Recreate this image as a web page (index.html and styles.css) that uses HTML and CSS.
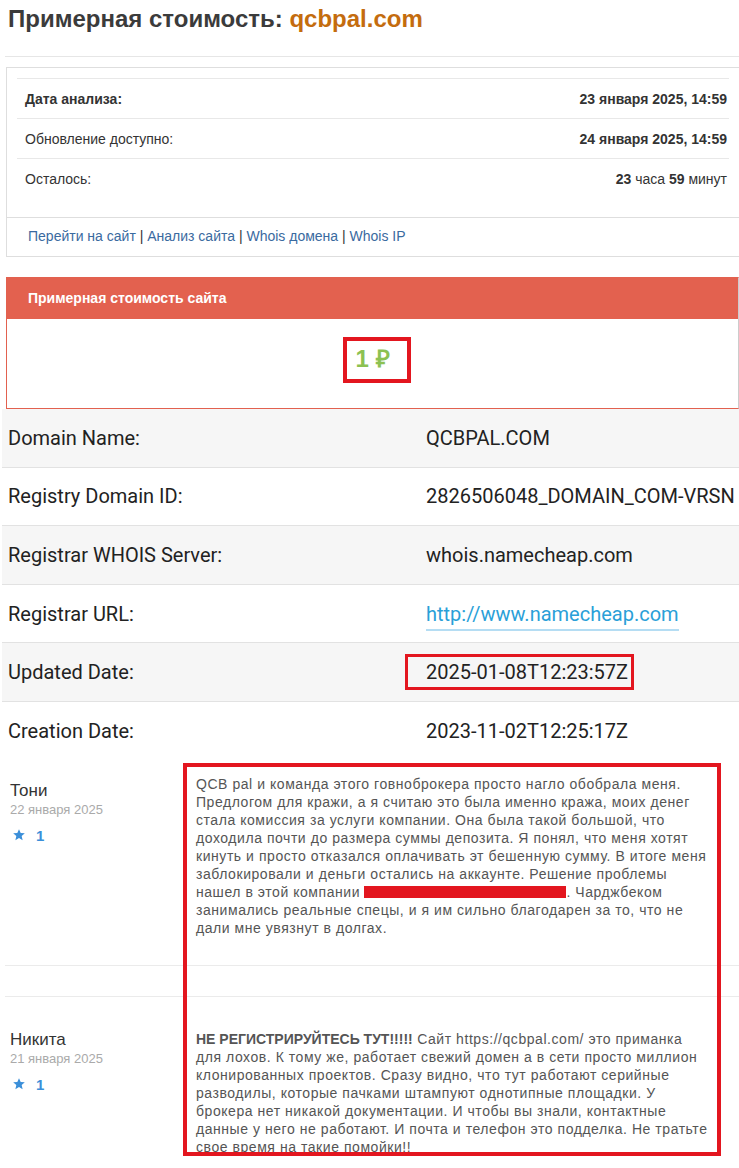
FILE: index.html
```html
<!DOCTYPE html>
<html>
	<head>
		<meta charset="utf-8" />
		<title>Примерная стоимость: qcbpal.com</title>
		<link rel="stylesheet" href="styles.css">
	</head>
	<body>
		<div id="page">
			<h1 class="title">Примерная стоимость: <span class="domain">qcbpal.com</span></h1>
			<hr class="divider" />

			<div class="panel">
				<div class="panel-body">
					<table class="info">
						<tr>
							<td><b>Дата анализа:</b></td>
							<td class="right"><b>23 января 2025, 14:59</b></td>
						</tr>
						<tr>
							<td>Обновление доступно:</td>
							<td class="right"><b>24 января 2025, 14:59</b></td>
						</tr>
						<tr>
							<td>Осталось:</td>
							<td class="right"><b>23</b> часа <b>59</b> минут</td>
						</tr>
					</table>
				</div>
				<div class="panel-footer">
					<a href="#">Перейти на сайт</a> | <a href="#">Анализ сайта</a> | <a href="#">Whois домена</a> | <a href="#">Whois IP</a>
				</div>
			</div>

			<div class="price-card">
				<div class="price-head">Примерная стоимость сайта</div>
				<div class="price-body">
					<span class="price mark">1 ₽</span>
				</div>
			</div>

			<table class="whois">
				<tr>
					<td class="key">Domain Name:</td>
					<td>QCBPAL.COM</td>
				</tr>
				<tr>
					<td class="key">Registry Domain ID:</td>
					<td>2826506048_DOMAIN_COM-VRSN</td>
				</tr>
				<tr>
					<td class="key">Registrar WHOIS Server:</td>
					<td>whois.namecheap.com</td>
				</tr>
				<tr>
					<td class="key">Registrar URL:</td>
					<td><a class="ext" href="#">http://www.namecheap.com</a></td>
				</tr>
				<tr>
					<td class="key">Updated Date:</td>
					<td><span class="mark mark-thin">2025-01-08T12:23:57Z</span></td>
				</tr>
				<tr>
					<td class="key">Creation Date:</td>
					<td>2023-11-02T12:25:17Z</td>
				</tr>
			</table>

			<div class="comments">
				<div class="comment first">
					<div class="author">
						<div class="name">Тони</div>
						<div class="date">22 января 2025</div>
						<div class="rating"><svg viewBox="0 0 24 24" width="14" height="14"><path d="M12 2l2.9 6.6 7.1.6-5.4 4.7 1.6 7-6.2-3.7-6.2 3.7 1.6-7L2 9.2l7.1-.6z" fill="#3b8fd9"/></svg><span>1</span></div>
					</div>
					<div class="text">QCB pal и команда этого говноброкера просто нагло обобрала меня.<br>
Предлогом для кражи, а я считаю это была именно кража, моих денег<br>
стала комиссия за услуги компании. Она была такой большой, что<br>
доходила почти до размера суммы депозита. Я понял, что меня хотят<br>
кинуть и просто отказался оплачивать эт бешенную сумму. В итоге меня<br>
заблокировали и деньги остались на аккаунте. Решение проблемы<br>
нашел в этой компании <span class="redacted"></span>. Чарджбеком<br>
занимались реальные спецы, и я им сильно благодарен за то, что не<br>
дали мне увязнут в долгах.</div>
				</div>
				<div class="reply-row"></div>
				<div class="comment second">
					<div class="author">
						<div class="name">Никита</div>
						<div class="date">21 января 2025</div>
						<div class="rating"><svg viewBox="0 0 24 24" width="14" height="14"><path d="M12 2l2.9 6.6 7.1.6-5.4 4.7 1.6 7-6.2-3.7-6.2 3.7 1.6-7L2 9.2l7.1-.6z" fill="#3b8fd9"/></svg><span>1</span></div>
					</div>
					<div class="text"><b>НЕ РЕГИСТРИРУЙТЕСЬ ТУТ!!!!!</b> Сайт https://qcbpal.com/ это приманка<br>
для лохов. К тому же, работает свежий домен а в сети просто миллион<br>
клонированных проектов. Сразу видно, что тут работают серийные<br>
разводилы, которые пачками штампуют однотипные площадки. У<br>
брокера нет никакой документации. И чтобы вы знали, контактные<br>
данные у него не работают. И почта и телефон это подделка. Не тратьте<br>
свое время на такие помойки!!</div>
				</div>
				<div class="comments-mark"></div>
			</div>
		</div>
	</body>
</html>
```

FILE: styles.css
```css
body {
	margin: 0px;
	font-family: "Liberation Sans", Arial, sans-serif;
	color: #333;
	background: #fff;
}

#page {
	width: 739px;
	overflow: hidden;
}

.title {
	margin: 0px;
	padding: 5px 0px 0px 8px;
	font-size: 24px;
	line-height: 28px;
	color: #3b3b3b;
}

.domain {
	color: #c46c0e;
}

.divider {
	border: 0px;
	border-top: 1px solid #e6e6e6;
	margin: 23px 0px 10px 5px;
}

.panel {
	margin-left: 6px;
	border: 1px solid #dedede;
	border-right: 0px;
	font-size: 14px;
}

.panel-body {
	padding: 10px 10px 19px 10px;
}

.info {
	width: 100%;
	border-collapse: collapse;
}

.info td {
	border-top: 1px solid #e8e8e8;
	padding: 0px 2px 0px 8px;
	height: 39px;
	color: #333;
}

.info .right {
	text-align: right;
}

.panel-footer {
	border-top: 1px solid #dedede;
	padding: 9px 21px 10px 21px;
	line-height: 19px;
	color: #333;
}

.panel-footer a {
	color: #3a6aa0;
	text-decoration: none;
}

.price-card {
	margin: 20px 0px 0px 6px;
	border: 1px solid #e2614f;
	border-right-color: #ccc;
}

.price-head {
	background-color: #e3614f;
	color: #fff;
	font-weight: bold;
	font-size: 14px;
	height: 41px;
	line-height: 41px;
	padding-left: 21px;
}

.price-body {
	height: 89px;
	display: flex;
	align-items: center;
	justify-content: center;
}

.price {
	font-size: 24px;
	line-height: 28px;
	font-weight: bold;
	color: #8cc152;
	margin-top: -10px;
}

.mark {
	position: relative;
}

.mark::after {
	content: "";
	position: absolute;
	left: -12px;
	right: -21px;
	top: -8px;
	bottom: -10px;
	border: 4px solid #e3161f;
}

.mark-thin::after {
	left: -21px;
	right: -6px;
	top: -6px;
	bottom: -6px;
	border-width: 3px;
}

.whois {
	width: 737px;
	margin-left: 2px;
	border-collapse: collapse;
	font-family: Roboto, "Liberation Sans", sans-serif;
	font-size: 20px;
	color: #222;
}

.whois td {
	height: 57.6px;
	padding: 0px;
	border-bottom: 1px solid #e2e2e2;
}

.whois tr:nth-child(odd) td {
	background-color: #f6f6f6;
}

.whois tr:last-child td {
	border-bottom: 0px;
}

.whois .key {
	width: 418px;
	padding-left: 6px;
}

.ext {
	color: #2a9fd8;
	text-decoration: none;
	border-bottom: 2px solid #b5ddf3;
	padding-bottom: 3px;
}

.comments {
	position: relative;
}

.comment {
	display: flex;
	border-bottom: 1px solid #ebebeb;
	margin-left: 5px;
}

.comment.first {
	padding: 15px 0px 28px 0px;
}

.comment.second {
	border-bottom: 0px;
	padding: 33px 0px 20px 0px;
}

.comment.second .author {
	padding-top: 0px;
}

.reply-row {
	height: 30px;
	border-bottom: 1px solid #ebebeb;
	margin-left: 5px;
}

.author {
	width: 186px;
	flex-shrink: 0;
	padding: 6px 0px 0px 5px;
}

.name {
	font-size: 17px;
	line-height: 20px;
	color: #333;
}

.date {
	font-size: 13px;
	line-height: 18px;
	color: #aaa;
}

.rating {
	display: flex;
	align-items: center;
	gap: 10px;
	margin-top: 8px;
	padding-left: 2px;
	font-size: 15px;
	font-weight: bold;
	color: #3b8fd9;
}

.text {
	width: 545px;
	font-size: 14px;
	letter-spacing: 0.55px;
	line-height: 18px;
	color: #555;
}

.text b {
	letter-spacing: 0px;
}

.redacted {
	display: inline-block;
	width: 202px;
	height: 12px;
	background-color: #e3161f;
	vertical-align: -1px;
}

.comments-mark {
	position: absolute;
	left: 183px;
	top: 3px;
	width: 530px;
	height: 385px;
	border: 4px solid #e3161f;
}
```
